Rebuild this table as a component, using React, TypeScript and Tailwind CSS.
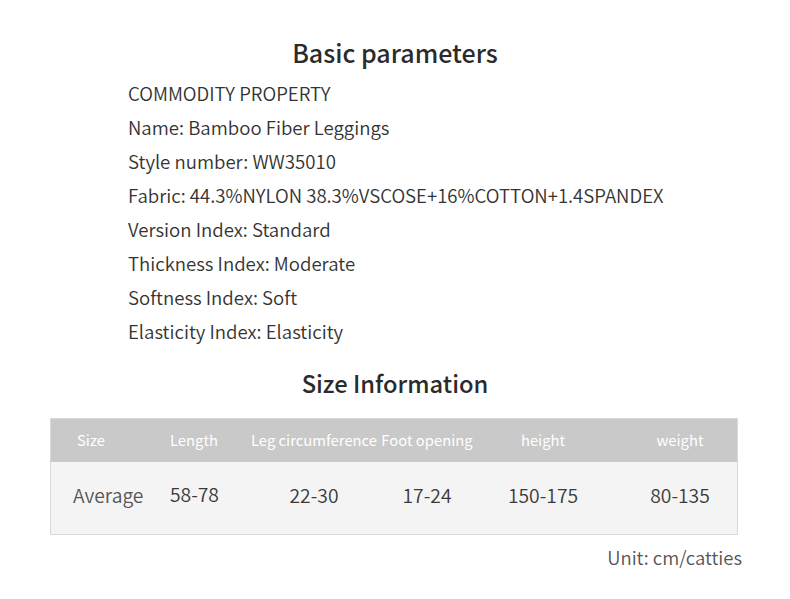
const props = [
  'COMMODITY PROPERTY',
  'Name: Bamboo Fiber Leggings',
  'Style number: WW35010',
  'Fabric: 44.3%NYLON 38.3%VSCOSE+16%COTTON+1.4SPANDEX',
  'Version Index: Standard',
  'Thickness Index: Moderate',
  'Softness Index: Soft',
  'Elasticity Index: Elasticity',
];

export default function App() {
  return (
    <div
      className="w-[790px] h-[599px] bg-white flex flex-col text-[#333]"
      style={{ fontFamily: '"Noto Sans CJK SC", "Noto Sans", sans-serif' }}
    >
      <h1 className="mt-[36px] text-center text-[25px] leading-[32px] font-medium text-[#2b2b2b]">
        Basic parameters
      </h1>

      <ul className="mt-[8px] pl-[128px] font-[350]">
        {props.map((p) => (
          <li key={p} className="text-[18.6px] leading-[34px]">
            {p}
          </li>
        ))}
      </ul>

      <h2 className="mt-[19px] text-center text-[23.7px] leading-[32px] font-medium text-[#2b2b2b]">
        Size Information
      </h2>

      <div className="mt-[19px] ml-[50px] w-[688px] border border-[#d9d9d9]">
        <div className="grid grid-cols-[100px_100px_126px_100px_132px_128px] h-[43px] items-center bg-[#c9c9c9] text-white text-[14.8px]">
          <div className="pl-[26px]">Size</div>
          <div className="pl-[19px]">Length</div>
          <div className="text-center whitespace-nowrap">Leg circumference</div>
          <div className="text-center whitespace-nowrap">Foot opening</div>
          <div className="text-center">height</div>
          <div className="text-center pl-[14px]">weight</div>
        </div>
        <div className="grid grid-cols-[100px_100px_126px_100px_132px_128px] h-[72px] items-center pb-[6px] bg-[#f4f4f4] text-[19.3px] font-[350] text-[#3a3a3a]">
          <div className="pl-[22px] text-[#555]">Average</div>
          <div className="pl-[19px] -mt-[2px]">58-78</div>
          <div className="text-center">22-30</div>
          <div className="text-center">17-24</div>
          <div className="text-center">150-175</div>
          <div className="text-center pl-[14px]">80-135</div>
        </div>
      </div>

      <p className="mt-[10px] pr-[48px] text-right text-[18.5px] leading-[24px] font-[350] text-[#555]">
        Unit: cm/catties
      </p>
    </div>
  );
}
